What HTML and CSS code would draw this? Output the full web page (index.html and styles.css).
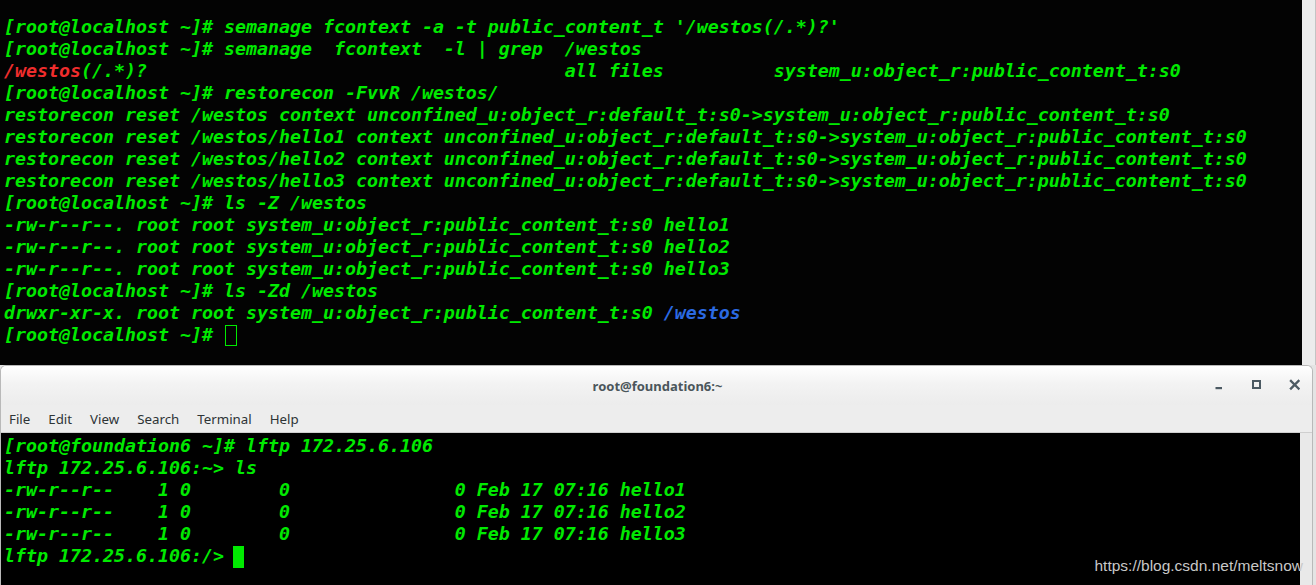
FILE: index.html
```html
<!DOCTYPE html>
<html>
<head>
<meta charset="utf-8">
<link rel="stylesheet" href="styles.css">
</head>
<body>
<div class="screen">
  <section class="top-term">
    <div class="term-text top-text">
      <div class="ln">[root@localhost ~]# semanage fcontext -a -t public_content_t '/westos(/.*)?'</div>
      <div class="ln">[root@localhost ~]# semanage  fcontext  -l | grep  /westos</div>
      <div class="ln"><span class="red">/westos</span>(/.*)?                                      all files          system_u:object_r:public_content_t:s0</div>
      <div class="ln">[root@localhost ~]# restorecon -FvvR /westos/</div>
      <div class="ln">restorecon reset /westos context unconfined_u:object_r:default_t:s0-&gt;system_u:object_r:public_content_t:s0</div>
      <div class="ln">restorecon reset /westos/hello1 context unconfined_u:object_r:default_t:s0-&gt;system_u:object_r:public_content_t:s0</div>
      <div class="ln">restorecon reset /westos/hello2 context unconfined_u:object_r:default_t:s0-&gt;system_u:object_r:public_content_t:s0</div>
      <div class="ln">restorecon reset /westos/hello3 context unconfined_u:object_r:default_t:s0-&gt;system_u:object_r:public_content_t:s0</div>
      <div class="ln">[root@localhost ~]# ls -Z /westos</div>
      <div class="ln">-rw-r--r--. root root system_u:object_r:public_content_t:s0 hello1</div>
      <div class="ln">-rw-r--r--. root root system_u:object_r:public_content_t:s0 hello2</div>
      <div class="ln">-rw-r--r--. root root system_u:object_r:public_content_t:s0 hello3</div>
      <div class="ln">[root@localhost ~]# ls -Zd /westos</div>
      <div class="ln">drwxr-xr-x. root root system_u:object_r:public_content_t:s0 <span class="blue">/westos</span></div>
      <div class="ln">[root@localhost ~]# <span class="cursor-outline"></span></div>
    </div>
    <div class="scroll-strip top-strip"></div>
  </section>

  <section class="window">
    <header class="titlebar">
      <div class="title">root@foundation6:~</div>
      <div class="controls">
        <svg class="ctl" width="12" height="12" viewBox="0 0 12 12"><rect x="2.5" y="8" width="6.5" height="2.2" fill="#4c5a63"/></svg>
        <svg class="ctl" width="12" height="12" viewBox="0 0 12 12"><rect x="2" y="2" width="7" height="7" fill="none" stroke="#4c5a63" stroke-width="2"/></svg>
        <svg class="ctl" width="12" height="12" viewBox="0 0 12 12"><path d="M2 2 L9.5 9.5 M9.5 2 L2 9.5" stroke="#4c5a63" stroke-width="2.4" stroke-linecap="square"/></svg>
      </div>
    </header>
    <nav class="menubar">
      <span class="menu-item">File</span>
      <span class="menu-item">Edit</span>
      <span class="menu-item">View</span>
      <span class="menu-item">Search</span>
      <span class="menu-item">Terminal</span>
      <span class="menu-item">Help</span>
    </nav>
    <div class="bottom-term">
      <div class="term-text bottom-text">
        <div class="ln">[root@foundation6 ~]# lftp 172.25.6.106</div>
        <div class="ln">lftp 172.25.6.106:~&gt; ls</div>
        <div class="ln">-rw-r--r--    1 0        0               0 Feb 17 07:16 hello1</div>
        <div class="ln">-rw-r--r--    1 0        0               0 Feb 17 07:16 hello2</div>
        <div class="ln">-rw-r--r--    1 0        0               0 Feb 17 07:16 hello3</div>
        <div class="ln">lftp 172.25.6.106:/&gt; <span class="cursor-block"></span></div>
      </div>
      <div class="scroll-strip bottom-strip"></div>
      <div class="watermark">https://blog.csdn.net/meltsnow</div>
    </div>
  </section>
</div>
</body>
</html>
```

FILE: styles.css
```css
html, body {
  margin: 0;
  padding: 0;
  background: #000;
  overflow: hidden;
}

.screen {
  width: 1316px;
  height: 585px;
  display: flex;
  flex-direction: column;
  background: #e4e4e4;
}

.top-term {
  height: 365px;
  display: flex;
  flex-shrink: 0;
  background: #030303;
}

.term-text {
  flex: 1;
  font-family: "DejaVu Sans Mono", "Liberation Mono", monospace;
  font-size: 18.27px;
  font-weight: bold;
  font-style: italic;
  line-height: 22px;
  color: #00ea00;
  overflow: hidden;
}

.top-text {
  padding: 16px 0 0 4px;
}

.ln {
  height: 22px;
  white-space: pre;
}

.red { color: #ef2d2d; }
.blue { color: #2b6ae2; }

.cursor-outline {
  display: inline-block;
  width: 12px;
  height: 21px;
  border: 1px solid #00ea00;
  box-sizing: border-box;
  vertical-align: -5px;
  margin-left: 1px;
}

.cursor-block {
  display: inline-block;
  width: 11px;
  height: 22px;
  background: #00ea00;
  vertical-align: -6px;
  margin-left: -2px;
}

.scroll-strip {
  width: 13px;
  flex-shrink: 0;
  background: #ececec;
}

.top-strip {
  border-right: 1px solid #c4c4c4;
}

.window {
  flex: 1;
  width: 1313px;
  display: flex;
  flex-direction: column;
  border-top-left-radius: 6px;
  border-top-right-radius: 6px;
  border: 1px solid #b9b9b9;
  border-bottom: none;
  box-sizing: border-box;
  overflow: hidden;
  background: #ededed;
}

.titlebar {
  height: 39px;
  flex-shrink: 0;
  display: flex;
  align-items: center;
  justify-content: center;
  position: relative;
  background: linear-gradient(#ffffff, #f3f3f3 45%, #ececec);
}

.title {
  font-family: "Noto Sans", "DejaVu Sans", sans-serif;
  font-weight: bold;
  font-size: 13px;
  color: #4b565b;
  margin-left: 2px;
  margin-top: 1px;
}

.controls {
  position: absolute;
  right: 11px;
  top: 13px;
  display: flex;
  gap: 26px;
}

.ctl {
  display: block;
}

.menubar {
  height: 27px;
  flex-shrink: 0;
  display: flex;
  align-items: center;
  gap: 18px;
  padding-left: 8px;
  border-bottom: 1px solid #cfcfcf;
  font-family: "Noto Sans", "DejaVu Sans", sans-serif;
  font-size: 13.3px;
  color: #2e3436;
}

.bottom-term {
  flex: 1;
  display: flex;
  position: relative;
  background: #000;
}

.bottom-text {
  padding: 2px 0 0 3px;
}

.bottom-strip {
  width: 12px;
  background: #e9e9e9;
}

.watermark {
  position: absolute;
  right: 9px;
  bottom: 10px;
  font-family: "Liberation Sans", Arial, sans-serif;
  font-size: 15.5px;
  color: #c8c8c8;
}
```
